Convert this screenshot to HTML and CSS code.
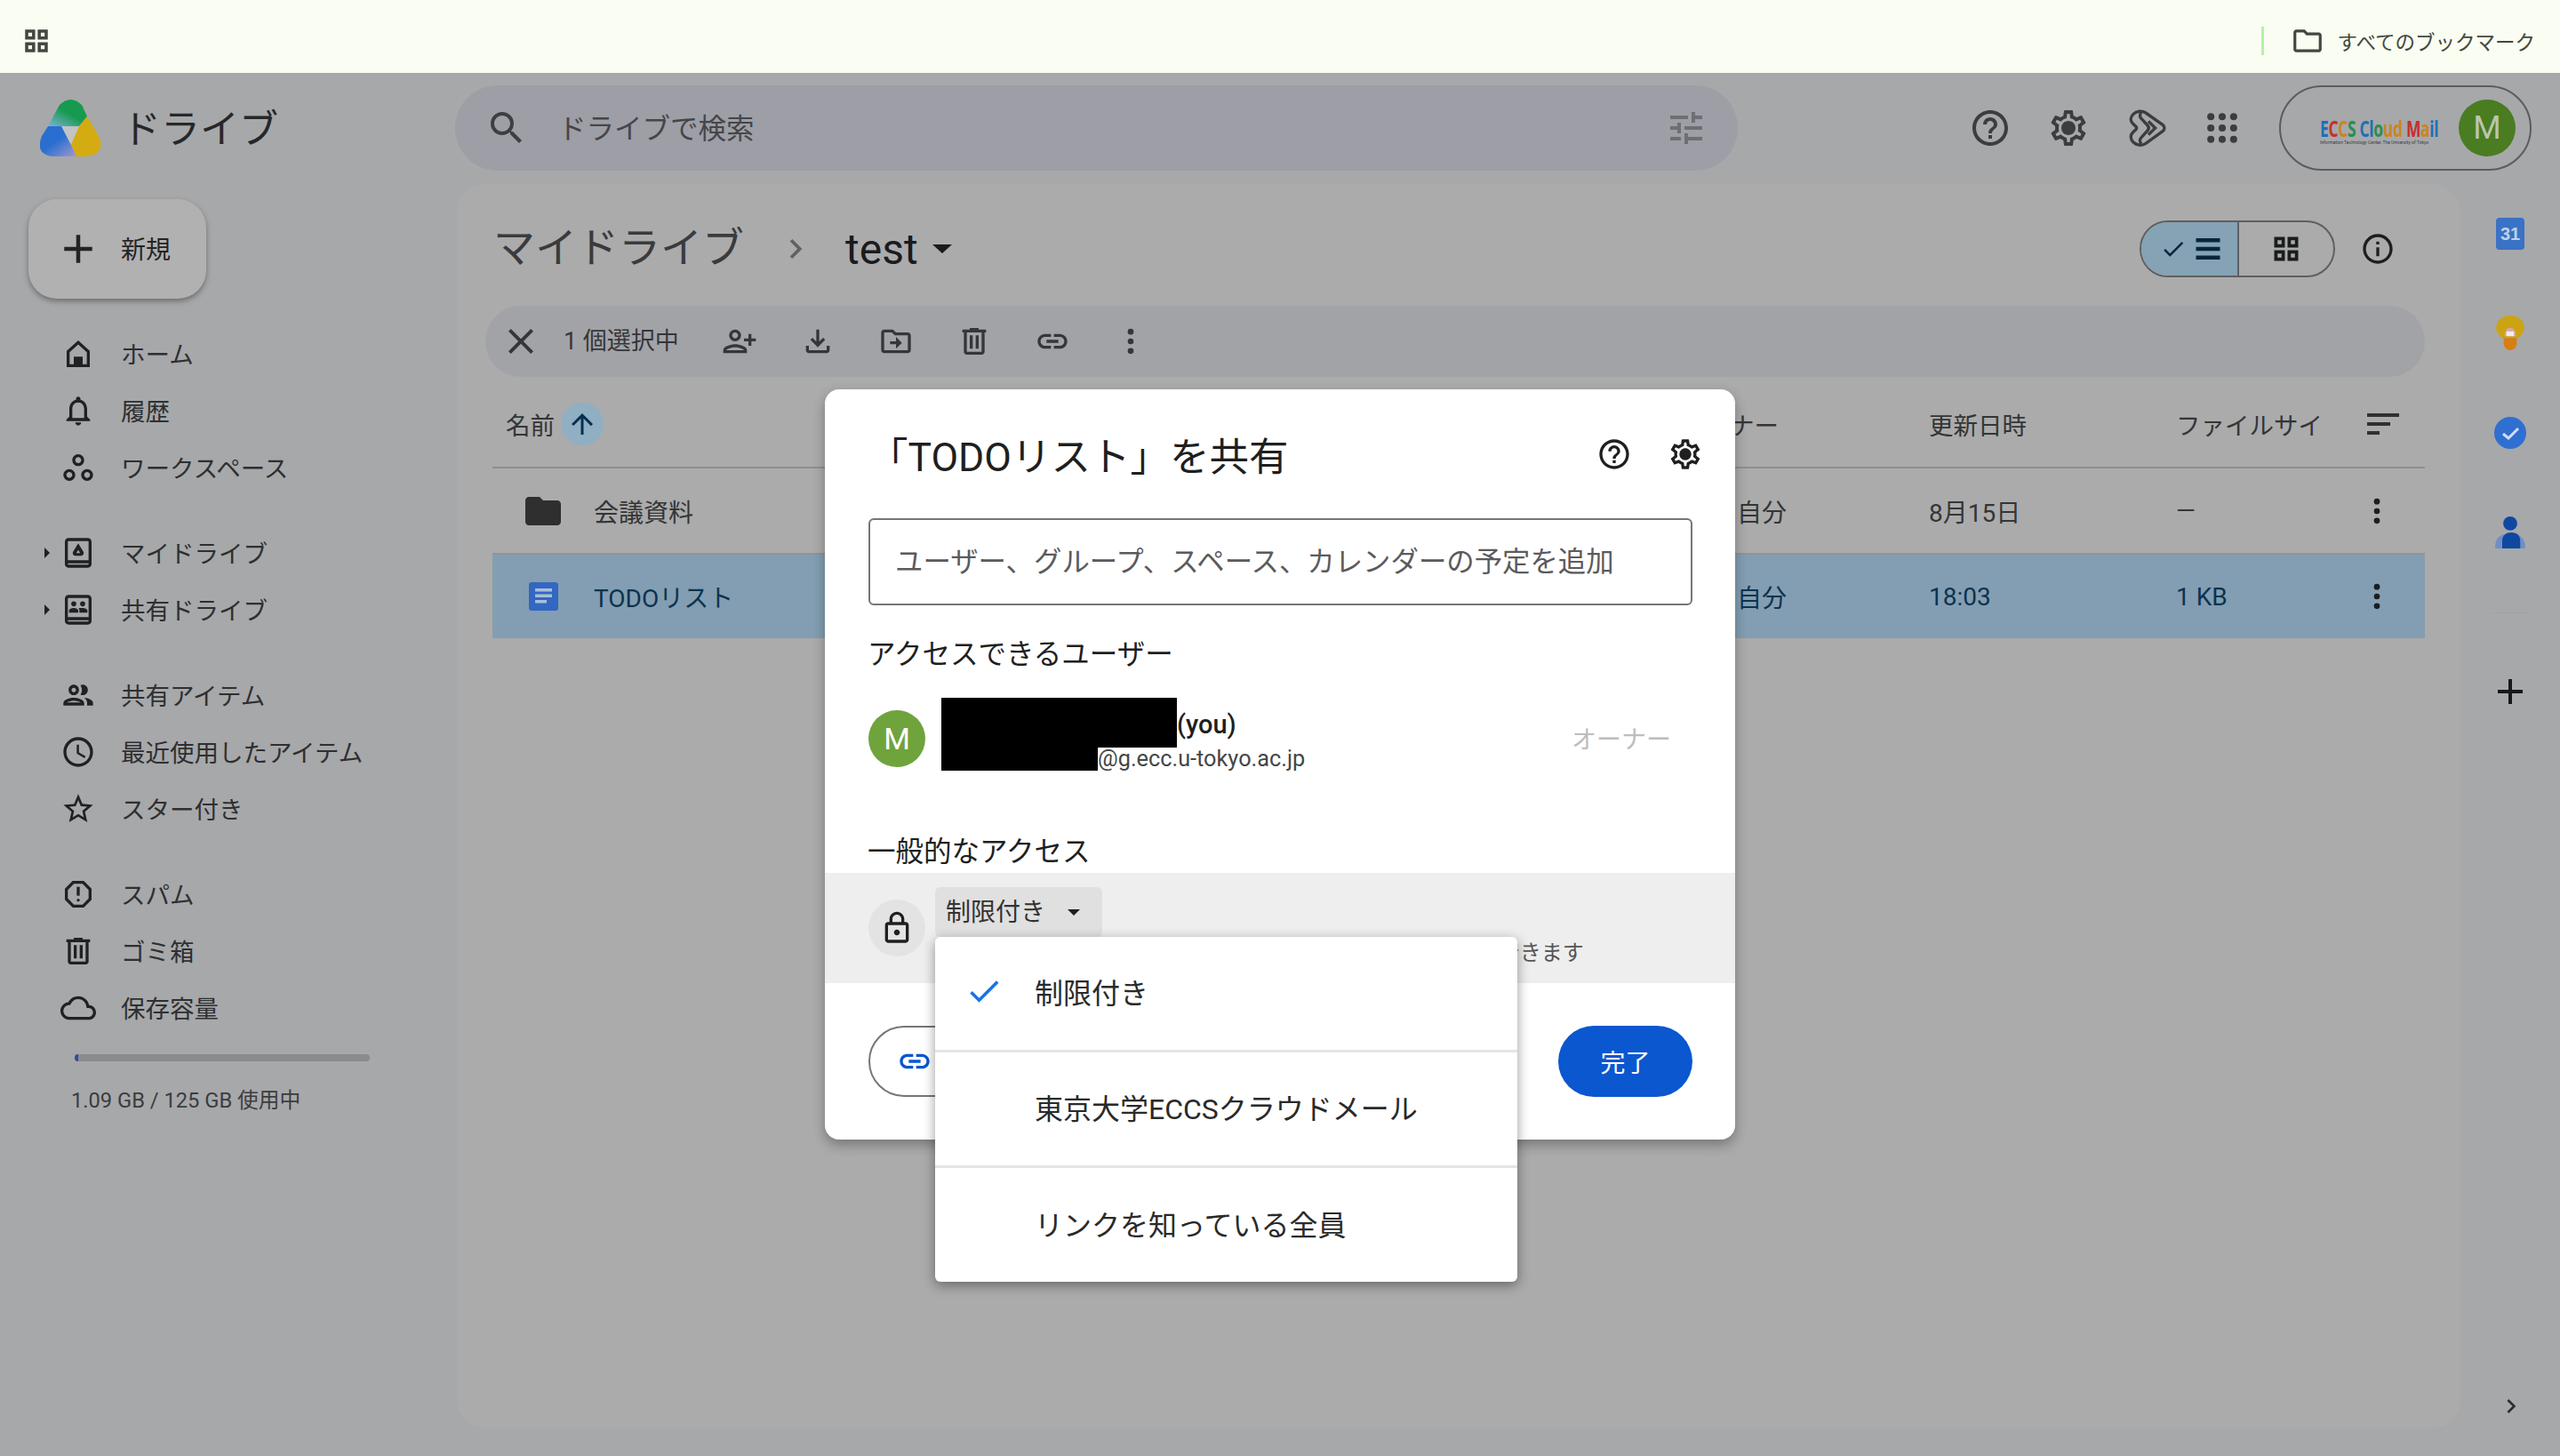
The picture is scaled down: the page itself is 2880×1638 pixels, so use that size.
FILE: index.html
```html
<!DOCTYPE html>
<html lang="ja">
<head>
    <meta charset="UTF-8">
    <title>マイドライブ - Google ドライブ</title>
    <link rel="stylesheet" href="styles.css">
</head>
<body>
    <!-- shared icons -->
    <svg class="sprite" xmlns="http://www.w3.org/2000/svg">
        <symbol id="i-grid" viewBox="0 0 24 24"><path fill-rule="evenodd" d="M3 3h8v8H3zm2.5 2.5v3h3v-3zM13 3h8v8h-8zm2.5 2.5v3h3v-3zM3 13h8v8H3zm2.5 2.5v3h3v-3zM13 13h8v8h-8zm2.5 2.5v3h3v-3z"/></symbol>
        <symbol id="i-help" viewBox="0 0 24 24"><path d="M11 18h2v-2h-2v2zm1-16C6.48 2 2 6.48 2 12s4.48 10 10 10 10-4.48 10-10S17.52 2 12 2zm0 18c-4.41 0-8-3.59-8-8s3.59-8 8-8 8 3.59 8 8-3.59 8-8 8zm0-14c-2.21 0-4 1.79-4 4h2c0-1.1.9-2 2-2s2 .9 2 2c0 2-3 1.75-3 5h2c0-2.25 3-2.5 3-5 0-2.21-1.79-4-4-4z"/></symbol>
        <symbol id="i-gear" viewBox="0 0 24 24"><path d="M19.43 12.98c.04-.32.07-.64.07-.98 0-.34-.03-.66-.07-.98l2.11-1.65c.19-.15.24-.42.12-.64l-2-3.46c-.09-.16-.26-.25-.44-.25-.06 0-.12.01-.17.03l-2.49 1c-.52-.4-1.08-.73-1.69-.98l-.38-2.65C14.46 2.18 14.25 2 14 2h-4c-.25 0-.46.18-.49.42l-.38 2.65c-.61.25-1.17.59-1.69.98l-2.49-1c-.06-.02-.12-.03-.18-.03-.17 0-.34.09-.43.25l-2 3.46c-.13.22-.07.49.12.64l2.11 1.65c-.04.32-.07.65-.07.98 0 .33.03.66.07.98l-2.11 1.65c-.19.15-.24.42-.12.64l2 3.46c.09.16.26.25.44.25.06 0 .12-.01.17-.03l2.49-1c.52.4 1.08.73 1.69.98l.38 2.65c.03.24.24.42.49.42h4c.25 0 .46-.18.49-.42l.38-2.65c.61-.25 1.17-.59 1.69-.98l2.49 1c.06.02.12.03.18.03.17 0 .34-.09.43-.25l2-3.46c.12-.22.07-.49-.12-.64l-2.11-1.65zm-1.98-1.71c.04.31.05.52.05.73 0 .21-.02.43-.05.73l-.14 1.13.89.7 1.08.84-.7 1.21-1.27-.51-1.04-.42-.9.68c-.43.32-.84.56-1.25.73l-1.06.43-.16 1.13-.2 1.35h-1.4l-.19-1.35-.16-1.13-1.06-.43c-.43-.18-.83-.41-1.23-.71l-.91-.7-1.06.43-1.27.51-.7-1.21 1.08-.84.89-.7-.14-1.13c-.03-.31-.05-.54-.05-.74s.02-.43.05-.73l.14-1.13-.89-.7-1.08-.84.7-1.21 1.27.51 1.04.42.9-.68c.43-.32.84-.56 1.25-.73l1.06-.43.16-1.13.2-1.35h1.39l.19 1.35.16 1.13 1.06.43c.43.18.83.41 1.23.71l.91.7 1.06-.43 1.27-.51.7 1.21-1.07.85-.89.7.14 1.13zM12 8c-2.21 0-4 1.79-4 4s1.79 4 4 4 4-1.79 4-4-1.79-4-4-4z"/></symbol>
        <symbol id="i-link" viewBox="0 0 24 24"><path d="M17 7h-4v2h4c1.65 0 3 1.35 3 3s-1.35 3-3 3h-4v2h4c2.76 0 5-2.24 5-5s-2.24-5-5-5zm-6 8H7c-1.65 0-3-1.35-3-3s1.35-3 3-3h4V7H7c-2.76 0-5 2.24-5 5s2.24 5 5 5h4v-2zm-3-4h8v2H8z"/></symbol>
        <symbol id="i-more" viewBox="0 0 24 24"><circle cx="12" cy="5.5" r="2"/><circle cx="12" cy="12" r="2"/><circle cx="12" cy="18.5" r="2"/></symbol>
        <symbol id="i-plus" viewBox="0 0 24 24"><path d="M19 13h-6v6h-2v-6H5v-2h6V5h2v6h6v2z"/></symbol>
        <symbol id="i-trash" viewBox="0 0 24 24"><path d="M15 4V3H9v1H4v2h1v13c0 1.1.9 2 2 2h10c1.1 0 2-.9 2-2V6h1V4h-5zm2 15H7V6h10v13zM9 8h2v9H9zm4 0h2v9h-2z"/></symbol>
        <symbol id="i-book" viewBox="0 0 24 24"><path fill-rule="evenodd" d="M5.5 2h13C19.9 2 21 3.1 21 4.5v15c0 1.4-1.1 2.5-2.5 2.5h-13C4.1 22 3 20.9 3 19.500v-15C3 3.1 4.1 2 5.5 2zm0 2c-.3 0-.5.2-.5.5V17h14V4.500c0-.3-.2-.5-.5-.5zM5 19v.5c0 .3.2.5.5.5h13c.3 0 .5-.2.5-.5V19z"/></symbol>
    </svg>

    <div class="bookmarks">
        <svg class="ic-bar"><use href="#i-grid"/></svg>
        <div class="bookmarks-right">
            <span class="bookmarks-sep"></span>
            <svg class="ic-folder-line" viewBox="0 0 24 24"><path d="M20 6h-8l-2-2H4c-1.1 0-2 .9-2 2v12c0 1.1.9 2 2 2h16c1.1 0 2-.9 2-2V8c0-1.1-.9-2-2-2zm0 12H4V6h5.17l2 2H20v10z"/></svg>
            <span>すべてのブックマーク</span>
        </div>
    </div>

    <div class="app">
        <header class="topbar">
            <div class="brand">
                <svg class="logo" viewBox="0 0 69 64">
                    <defs>
                        <linearGradient id="g-green" x1="0" y1="1" x2="0.45" y2="0.45"><stop offset="0" stop-color="#7fb2d8"/><stop offset="1" stop-color="#169a50"/></linearGradient>
                        <linearGradient id="g-blue" x1="0.45" y1="0.5" x2="0.9" y2="1"><stop offset="0" stop-color="#2a6fd0"/><stop offset="1" stop-color="#9a94cf"/></linearGradient>
                    </defs>
                    <path fill="#c2c3c4" d="M23 30h22L35 51z"/>
                    <path fill="url(#g-green)" d="M22 6Q34.5-6 47 6L53 19 44 30H23L9 30z"/>
                    <path fill="url(#g-blue)" d="M24 30 41 63 40 64H15Q-6 62 2 41L9 30z"/>
                    <path fill="#d5ab12" d="M53 19 67 43Q73 62 52 64H41L35 51 44 30z"/>
                </svg>
                <span class="brand-name">ドライブ</span>
            </div>
            <div class="search">
                <svg class="ic" viewBox="0 0 24 24"><path d="M15.5 14h-.79l-.28-.27A6.471 6.471 0 0 0 16 9.5 6.5 6.5 0 1 0 9.5 16c1.61 0 3.09-.59 4.23-1.57l.27.28v.79l5 4.99L20.49 19l-4.99-5zm-6 0C7.01 14 5 11.99 5 9.5S7.01 5 9.5 5 14 7.01 14 9.5 11.99 14 9.5 14z"/></svg>
                <span class="search-text">ドライブで検索</span>
                <svg class="ic tune" viewBox="0 0 24 24"><path d="M3 17v2h6v-2H3zM3 5v2h10V5H3zm10 16v-2h8v-2h-8v-2h-2v6h2zM7 9v2H3v2h4v2h2V9H7zm14 4v-2H11v2h10zm-6-4h2V7h4V5h-4V3h-2v6z"/></svg>
            </div>
            <div class="top-icons">
                <span class="slot"><svg class="ic"><use href="#i-help"/></svg></span>
                <span class="slot"><svg class="ic"><use href="#i-gear"/></svg></span>
                <span class="slot">
                    <svg class="ic gem" viewBox="0 0 24 24"><path d="M4.5 4.2C6.3 2.4 9.3 2 11.5 3.5L21 10.2c1.3 1 1.3 2.7 0 3.6l-9.500 6.900C9.300 22.200 6.300 21.800 4.500 20 2.700 18.200 2.700 16 4.200 14.500L6 12.800c.4-.5.4-1.100 0-1.600L4.200 9.500C2.700 8 2.700 6 4.500 4.200z"/><path d="M9 3.200c-1 1-1 2.500 0 3.500l3.500 3.800c.8.9.8 2 0 3L9 17.300c-1 1-1 2.500 0 3.500M13 8.200l3.800 3.800-3.800 3.800"/></svg>
                </span>
                <span class="slot">
                    <svg class="ic apps" viewBox="0 0 24 24"><circle cx="5" cy="5" r="2.2"/><circle cx="12" cy="5" r="2.2"/><circle cx="19" cy="5" r="2.2"/><circle cx="5" cy="12" r="2.2"/><circle cx="12" cy="12" r="2.2"/><circle cx="19" cy="12" r="2.2"/><circle cx="5" cy="19" r="2.2"/><circle cx="12" cy="19" r="2.2"/><circle cx="19" cy="19" r="2.2"/></svg>
                </span>
            </div>
            <div class="account">
                <div class="eccs">
                    <div class="eccs-name"><b class="c-b">E</b><b class="c-r">C</b><b class="c-o">C</b><b class="c-g">S</b> <b class="c-b">Cl</b><b class="c-g">o</b><b class="c-o">ud</b> <b class="c-r">M</b><b class="c-o">a</b><b class="c-b">il</b></div>
                    <div class="eccs-sub">Information Technology Center, The University of Tokyo</div>
                </div>
                <span class="avatar-top">M</span>
            </div>
        </header>

        <aside class="sidebar">
            <button class="new-btn"><svg class="ic"><use href="#i-plus"/></svg><span>新規</span></button>
            <nav class="nav-group first">
                <a class="nav-item"><i class="tri-slot"></i><span class="nav-icon"><svg class="ic-s" viewBox="0 0 24 24"><path fill-rule="evenodd" d="M12 3 4.200 10v11h15.600V10zM17.800 19H15v-5H9v5H6.200v-8.100L12 5.700l5.800 5.200z"/></svg></span><span>ホーム</span></a>
                <a class="nav-item"><i class="tri-slot"></i><span class="nav-icon"><svg class="ic-s" viewBox="0 0 24 24"><path d="M12 22c1.100 0 2-.9 2-2h-4c0 1.100.9 2 2 2zm6-6v-5c0-3.070-1.630-5.640-4.500-6.320V4c0-.83-.67-1.500-1.500-1.500s-1.500.67-1.500 1.500v.68C7.640 5.360 6 7.920 6 11v5l-2 2v1h16v-1l-2-2zm-2 1H8v-6c0-2.480 1.510-4.500 4-4.500s4 2.020 4 4.500v6z"/></svg></span><span>履歴</span></a>
                <a class="nav-item"><i class="tri-slot"></i><span class="nav-icon"><svg class="ic-s" viewBox="0 0 24 24"><path d="M6 13c-2.200 0-4 1.800-4 4s1.800 4 4 4 4-1.800 4-4-1.800-4-4-4zm0 6c-1.100 0-2-.9-2-2s.9-2 2-2 2 .9 2 2-.9 2-2 2zm6-16C9.800 3 8 4.800 8 7s1.800 4 4 4 4-1.800 4-4-1.800-4-4-4zm0 6c-1.100 0-2-.9-2-2s.9-2 2-2 2 .9 2 2-.9 2-2 2zm6 4c-2.200 0-4 1.800-4 4s1.800 4 4 4 4-1.800 4-4-1.800-4-4-4zm0 6c-1.100 0-2-.9-2-2s.9-2 2-2 2 .9 2 2-.9 2-2 2z"/></svg></span><span>ワークスペース</span></a>
            </nav>
            <nav class="nav-group">
                <a class="nav-item"><i class="tri-slot tri"></i><span class="nav-icon"><svg class="ic-s" viewBox="0 0 24 24"><use href="#i-book"/><path fill-rule="evenodd" d="M12 5.500l3.500 5.800c.6 1.300-.3 2.700-1.700 2.700h-3.600c-1.400 0-2.300-1.400-1.700-2.700zm0 4.500l-1.300 2.200h2.600z"/></svg></span><span>マイドライブ</span></a>
                <a class="nav-item"><i class="tri-slot tri"></i><span class="nav-icon"><svg class="ic-s" viewBox="0 0 24 24"><use href="#i-book"/><circle cx="9" cy="8" r="1.700"/><circle cx="15" cy="8" r="1.700"/><path d="M5.800 14v-1.500c0-1 1.800-1.700 3.200-1.700s3 .7 3 1.700V14zM12.800 14v-1.500c0-.6-.2-1.100-.6-1.500.9-.2 1.900-.2 2.800-.2 1.400 0 3.200.7 3.200 1.700V14z"/></svg></span><span>共有ドライブ</span></a>
            </nav>
            <nav class="nav-group">
                <a class="nav-item"><i class="tri-slot"></i><span class="nav-icon"><svg class="ic-s" viewBox="0 0 24 24"><path d="M9 13.750c-2.340 0-7 1.170-7 3.500V19h14v-1.750c0-2.330-4.660-3.500-7-3.500zM4.340 17c.84-.58 2.870-1.250 4.660-1.250s3.820.67 4.660 1.250H4.340zM9 12c1.930 0 3.500-1.570 3.500-3.500S10.930 5 9 5 5.500 6.570 5.500 8.500 7.070 12 9 12zm0-5c.83 0 1.500.67 1.500 1.500S9.830 10 9 10s-1.500-.67-1.500-1.500S8.170 7 9 7zm7.040 6.810c1.160.84 1.960 1.960 1.960 3.440V19h4v-1.750c0-2.020-3.500-3.170-5.960-3.440zM15 12c1.930 0 3.500-1.570 3.500-3.500S16.930 5 15 5c-.54 0-1.040.13-1.500.35.63.89 1 1.980 1 3.150s-.37 2.260-1 3.150c.46.22.96.35 1.500.35z"/></svg></span><span>共有アイテム</span></a>
                <a class="nav-item"><i class="tri-slot"></i><span class="nav-icon"><svg class="ic-s" viewBox="0 0 24 24"><path d="M11.990 2C6.470 2 2 6.480 2 12s4.470 10 9.990 10C17.520 22 22 17.520 22 12S17.520 2 11.990 2zM12 20c-4.420 0-8-3.580-8-8s3.580-8 8-8 8 3.580 8 8-3.580 8-8 8zm.5-13H11v6l5.250 3.150.75-1.230-4.500-2.670z"/></svg></span><span>最近使用したアイテム</span></a>
                <a class="nav-item"><i class="tri-slot"></i><span class="nav-icon"><svg class="ic-s" viewBox="0 0 24 24"><path d="M22 9.240l-7.190-.62L12 2 9.190 8.630 2 9.240l5.460 4.730L5.820 21 12 17.270 18.180 21l-1.630-7.030L22 9.240zM12 15.400l-3.760 2.270 1-4.280-3.320-2.880 4.380-.38L12 6.100l1.710 4.040 4.380.38-3.320 2.880 1 4.280L12 15.400z"/></svg></span><span>スター付き</span></a>
            </nav>
            <nav class="nav-group">
                <a class="nav-item"><i class="tri-slot"></i><span class="nav-icon"><svg class="ic-s" viewBox="0 0 24 24"><path d="M15.730 3H8.270L3 8.270v7.460L8.270 21h7.460L21 15.730V8.270L15.730 3zM19 14.900L14.900 19H9.100L5 14.900V9.100L9.100 5h5.800L19 9.100v5.800z"/><circle cx="12" cy="16" r="1"/><path d="M11 7h2v6h-2z"/></svg></span><span>スパム</span></a>
                <a class="nav-item"><i class="tri-slot"></i><span class="nav-icon"><svg class="ic-s"><use href="#i-trash"/></svg></span><span>ゴミ箱</span></a>
                <a class="nav-item"><i class="tri-slot"></i><span class="nav-icon"><svg class="ic-s" viewBox="0 0 24 24"><path d="M19.350 10.040C18.670 6.590 15.640 4 12 4 9.110 4 6.600 5.640 5.350 8.040 2.340 8.360 0 10.910 0 14c0 3.310 2.690 6 6 6h13c2.760 0 5-2.240 5-5 0-2.640-2.050-4.780-4.650-4.960zM19 18H6c-2.210 0-4-1.790-4-4 0-2.050 1.530-3.760 3.560-3.970l1.070-.11.5-.95C8.080 7.140 9.940 6 12 6c2.620 0 4.880 1.860 5.390 4.430l.3 1.500 1.530.11c1.560.1 2.780 1.410 2.780 2.960 0 1.650-1.350 3-3 3z"/></svg></span><span>保存容量</span></a>
            </nav>
            <div class="storage-bar"><span class="storage-fill"></span></div>
            <div class="storage-text">1.09 GB / 125 GB 使用中</div>
        </aside>

        <main class="panel">
            <div class="title-row">
                <span class="crumb">マイドライブ</span>
                <svg class="crumb-chev" viewBox="0 0 24 24"><path d="M8.590 16.590 13.170 12 8.590 7.410 10 6l6 6-6 6z"/></svg>
                <span class="crumb-current">test</span>
                <span class="caret-big"></span>
                <div class="view-toggle">
                    <span class="toggle-on">
                        <svg class="ic-check" viewBox="0 0 24 24"><path d="M9 16.170 4.830 12l-1.420 1.410L9 19 21 7l-1.410-1.410z"/></svg>
                        <svg class="ic-list" viewBox="0 0 24 24"><path d="M3 4h18v3H3zM3 10.500h18v3H3zM3 17h18v3H3z"/></svg>
                    </span>
                    <span class="toggle-off"><svg class="ic-list"><use href="#i-grid"/></svg></span>
                </div>
                <svg class="ic-s info" viewBox="0 0 24 24"><path d="M11 7h2v2h-2zm0 4h2v6h-2zm1-9C6.480 2 2 6.480 2 12s4.480 10 10 10 10-4.480 10-10S17.520 2 12 2zm0 18c-4.410 0-8-3.590-8-8s3.590-8 8-8 8 3.590 8 8-3.590 8-8 8z"/></svg>
            </div>

            <div class="select-bar">
                <svg class="ic" viewBox="0 0 24 24"><path d="M19 6.410 17.590 5 12 10.590 6.410 5 5 6.410 10.590 12 5 17.590 6.410 19 12 13.410 17.590 19 19 17.590 13.410 12z"/></svg>
                <span class="select-count">1 個選択中</span>
                <span class="slot first-action"><svg class="ic-s" viewBox="0 0 24 24"><path d="M13 8c0-2.210-1.790-4-4-4S5 5.790 5 8s1.790 4 4 4 4-1.790 4-4zm-2 0c0 1.100-.9 2-2 2s-2-.9-2-2 .9-2 2-2 2 .9 2 2zM1 18v2h16v-2c0-2.660-5.330-4-8-4s-8 1.340-8 4zm2 0c.2-.71 3.300-2 6-2 2.690 0 5.770 1.280 6 2H3zM20 10V7h-2v3h-3v2h3v3h2v-3h3v-2h-3z"/></svg></span>
                <span class="slot"><svg class="ic-s" viewBox="0 0 24 24"><path d="M18 15v3H6v-3H4v3c0 1.100.9 2 2 2h12c1.100 0 2-.9 2-2v-3h-2zm-1-4-1.410-1.410L13 12.170V4h-2v8.170L8.410 9.590 7 11l5 5 5-5z"/></svg></span>
                <span class="slot"><svg class="ic-s" viewBox="0 0 24 24"><path d="M20 6h-8l-2-2H4c-1.100 0-2 .9-2 2v12c0 1.100.9 2 2 2h16c1.100 0 2-.9 2-2V8c0-1.100-.9-2-2-2zm0 12H4V6h5.170l2 2H20v10zm-8-4H8v-2h4V9l4 4-4 4v-3z"/></svg></span>
                <span class="slot"><svg class="ic-s"><use href="#i-trash"/></svg></span>
                <span class="slot"><svg class="ic-s"><use href="#i-link"/></svg></span>
                <span class="slot"><svg class="ic-s"><use href="#i-more"/></svg></span>
            </div>

            <div class="file-table">
                <div class="file-row file-head">
                    <div class="name-head">名前<span class="sort-up"><svg class="ic-arrow" viewBox="0 0 24 24"><path d="M4 12l1.410 1.410L11 7.830V20h2V7.830l5.580 5.590L20 12l-8-8-8 8z"/></svg></span></div>
                    <div class="owner-head">オーナー</div>
                    <div>更新日時</div>
                    <div>ファイルサイ</div>
                    <svg class="ic-sort" viewBox="0 0 36 24"><path d="M0 0h36v4H0zM0 10h26v4H0zM0 20h14v4H0z"/></svg>
                </div>
                <div class="file-row">
                    <div class="name-cell">
                        <span class="file-icon"><svg class="ic" viewBox="0 0 24 24"><path d="M10 4H4c-1.100 0-1.990.9-1.990 2L2 18c0 1.100.9 2 2 2h16c1.100 0 2-.9 2-2V8c0-1.100-.9-2-2-2h-8l-2-2z"/></svg></span>会議資料
                    </div>
                    <div>自分</div>
                    <div>8月15日</div>
                    <div>—</div>
                    <svg class="ic-s"><use href="#i-more"/></svg>
                </div>
                <div class="file-row selected">
                    <div class="name-cell">
                        <span class="file-icon"><svg class="doc" viewBox="0 0 33 32"><rect width="33" height="32" rx="3" fill="#3267c2"/><path fill="#a9bfd8" d="M7 7h19v3.500H7zM7 13.500h19V17H7zM7 20h13v3.500H7z"/></svg></span>TODOリスト
                    </div>
                    <div>自分</div>
                    <div>18:03</div>
                    <div>1 KB</div>
                    <svg class="ic-s"><use href="#i-more"/></svg>
                </div>
            </div>
        </main>

        <aside class="rail">
            <div class="rail-slot"><span class="cal">31</span></div>
            <div class="rail-slot">
                <svg class="rail-ic rail-keep" viewBox="0 0 32 38"><path fill="#cba414" d="M16 0C7 0 1 6 1 13c0 5 3 8 7 11h16c4-3 7-6 7-11 0-7-6-13-15-13z"/><path fill="#d67f10" d="M9 24h14v6a7 7 0 0 1-14 0z"/><path fill="#dba6a6" d="M10 22c0-5 2-9 6-9s6 4 6 9z"/><rect x="12" y="17" width="8" height="5" fill="#eee"/></svg>
            </div>
            <div class="rail-slot">
                <svg class="rail-ic" viewBox="0 0 36 36"><circle cx="18" cy="18" r="18" fill="#2f6fd1"/><path d="M10 19l6 5 11-11" fill="none" stroke="#d5def0" stroke-width="3"/></svg>
            </div>
            <div class="rail-slot">
                <svg class="rail-ic" viewBox="0 0 30 32"><circle cx="15" cy="7" r="7" fill="#0f48a0"/><path fill="#6f8fc5" d="M0 30c0-9 6-13 15-13 8 0 15 4 15 13v2H0z"/><path fill="#0f48a0" d="M7 32V24c0-5 4-8 9-8 6 0 9 3 9 9v7z"/></svg>
            </div>
            <div class="rail-sep"></div>
            <div class="rail-slot rail-add"><svg class="ic"><use href="#i-plus"/></svg></div>
            <svg class="rail-chev" viewBox="0 0 24 24"><path d="M8.590 16.590 13.170 12 8.590 7.410 10 6l6 6-6 6z"/></svg>
        </aside>
    </div>

    <div class="dialog">
        <div class="dialog-head">
            <h1 class="dialog-title">「TODOリスト」を共有</h1>
            <svg class="ic-s dialog-help"><use href="#i-help"/></svg>
            <svg class="ic-s"><use href="#i-gear"/></svg>
        </div>
        <div class="share-input"><span>ユーザー、グループ、スペース、カレンダーの予定を追加</span></div>
        <h2 class="section-title users-title">アクセスできるユーザー</h2>
        <div class="owner-row">
            <span class="avatar">M</span>
            <div class="owner-info">
                <div class="owner-line"><span class="redact redact-name"></span><span class="owner-you">(you)</span></div>
                <div class="owner-line"><span class="redact redact-mail"></span><span class="owner-mail">@g.ecc.u-tokyo.ac.jp</span></div>
            </div>
            <span class="owner-role">オーナー</span>
        </div>
        <h2 class="section-title access-title">一般的なアクセス</h2>
        <div class="access-band">
            <span class="lock-circle"><svg class="ic-s" viewBox="0 0 24 24"><path d="M18 8h-1V6c0-2.760-2.240-5-5-5S7 3.240 7 6v2H6c-1.100 0-2 .9-2 2v10c0 1.100.9 2 2 2h12c1.100 0 2-.9 2-2V10c0-1.100-.9-2-2-2zM9 6c0-1.660 1.340-3 3-3s3 1.340 3 3v2H9V6zm9 14H6V10h12v10zm-6-3c1.100 0 2-.9 2-2s-.9-2-2-2-2 .9-2 2 .9 2 2 2z"/></svg></span>
            <div class="access-col">
                <div class="access-select"><span>制限付き</span><span class="caret"></span></div>
                <div class="access-note">アクセス権のあるユーザーのみが、リンクから開くことができます</div>
            </div>
        </div>
        <div class="dialog-foot">
            <div class="copy-btn"><svg class="ic-s"><use href="#i-link"/></svg>リンクをコピー</div>
            <div class="done-btn">完了</div>
        </div>

        <ul class="access-menu">
            <li class="menu-item"><svg class="menu-check" viewBox="0 0 24 24"><path d="M9 16.170 4.830 12l-1.420 1.410L9 19 21 7l-1.410-1.410z"/></svg>制限付き</li>
            <li class="menu-item">東京大学ECCSクラウドメール</li>
            <li class="menu-item">リンクを知っている全員</li>
        </ul>
    </div>
</body>
</html>
```

FILE: styles.css
```css
* {
    box-sizing: border-box;
}
body {
    margin: 0;
    position: relative;
    width: 2880px;
    height: 1638px;
    overflow: hidden;
    background-color: #a7a8aa;
    color: #2d2e30;
    font-family: Roboto, "Noto Sans CJK JP", sans-serif;
    font-size: 28px;
}
.sprite {
    display: none;
}
svg {
    fill: currentColor;
    flex-shrink: 0;
}
.ic {
    width: 48px;
    height: 48px;
}
.ic-s {
    width: 40px;
    height: 40px;
}

/* bookmarks bar */
.bookmarks {
    display: flex;
    justify-content: space-between;
    align-items: center;
    height: 82px;
    padding: 10px 28px 0 24px;
    background-color: #f9fdf2;
    color: #43483f;
    font-size: 22.5px;
}
.ic-bar {
    width: 34px;
    height: 34px;
}
.bookmarks-right {
    display: flex;
    align-items: center;
}
.bookmarks-sep {
    width: 3px;
    height: 32px;
    margin-right: 30px;
    background-color: #b6f0a8;
}
.ic-folder-line {
    width: 38px;
    height: 38px;
    margin-right: 14px;
}

/* app grid */
.app {
    display: grid;
    grid-template-columns: 514px 2254px 112px;
    grid-template-rows: 125px 1431px;
}
.topbar {
    grid-column: 1 / -1;
    display: flex;
    align-items: flex-start;
    padding-top: 14px;
}
.brand {
    display: flex;
    align-items: center;
    width: 512px;
    height: 96px;
    padding-left: 45px;
    color: #26272a;
}
.logo {
    width: 69px;
    height: 64px;
}
.brand-name {
    margin: 0 0 5px 23px;
    font-size: 44px;
}
.search {
    display: flex;
    align-items: center;
    width: 1443px;
    height: 96px;
    padding: 0 34px;
    border-radius: 48px;
    background-color: #9d9ea6;
    color: #3d3e42;
}
.search-text {
    margin: 0 0 5px 34px;
    font-size: 31.5px;
    color: #45464a;
}
.tune {
    margin-left: auto;
    color: #6e6f75;
}
.top-icons {
    display: flex;
    margin-left: 240px;
    color: #3c3d3f;
}
.slot {
    display: flex;
    justify-content: center;
    align-items: center;
    width: 88px;
    height: 96px;
}
.gem {
    fill: none;
    stroke: currentColor;
    stroke-width: 1.7;
}
.apps {
    margin-left: -6px;
    width: 44px;
    height: 44px;
}
.account {
    display: flex;
    align-items: center;
    width: 284px;
    height: 96px;
    margin-left: 17px;
    padding-left: 44px;
    border: 2px solid #5b5c5f;
    border-radius: 48px;
}
.eccs {
    width: 136px;
    padding-top: 4px;
    white-space: nowrap;
}
.eccs-name {
    font-family: "Open Sans", sans-serif;
    font-size: 25px;
    line-height: 30px;
    letter-spacing: -.5px;
    transform: scaleX(.7);
    transform-origin: left center;
}
.eccs-name b {
    font-weight: 700;
}
.c-b { color: #1f6fb5; }
.c-r { color: #c4302b; }
.c-o { color: #c9861f; }
.c-g { color: #2b8c4f; }
.eccs-sub {
    margin-top: -3px;
    font-size: 5px;
    line-height: 8px;
    color: #3b3c3e;
}
.avatar-top {
    display: flex;
    justify-content: center;
    align-items: center;
    width: 64px;
    height: 64px;
    margin-left: 20px;
    border-radius: 50%;
    background-color: #4a7c22;
    color: #b9c7ae;
    font-size: 36px;
}

/* sidebar */
.sidebar {
    padding-top: 17px;
}
.new-btn {
    display: flex;
    align-items: center;
    gap: 21px;
    width: 200px;
    height: 112px;
    margin-left: 32px;
    padding: 0 0 0 29px;
    border: none;
    border-radius: 32px;
    background-color: #b1b1b1;
    box-shadow: 0 3px 6px rgba(0, 0, 0, .35);
    color: #232426;
    font: inherit;
}
.new-btn .ic {
    width: 54px;
    height: 54px;
}
.new-btn span {
    margin-bottom: 3px;
}
.nav-group {
    display: flex;
    flex-direction: column;
    margin-top: 32px;
}
.nav-group.first {
    margin-top: 30px;
}
.nav-item {
    display: flex;
    align-items: center;
    height: 64px;
    padding-left: 50px;
    font-size: 27.5px;
    color: #2e2f31;
}
.nav-item span:last-child {
    margin-bottom: 2px;
}
.nav-icon {
    display: flex;
    justify-content: center;
    width: 48px;
    margin-right: 24px;
    color: #202123;
}
.tri-slot {
    width: 14px;
}
.tri {
    height: 0;
    border-left: 6px solid #202123;
    border-top: 6px solid transparent;
    border-bottom: 6px solid transparent;
}
.storage-bar {
    height: 8px;
    width: 332px;
    margin: 20px 0 0 84px;
    border-radius: 4px;
    background-color: #8a8b8d;
    overflow: hidden;
}
.storage-fill {
    display: block;
    width: 4px;
    height: 100%;
    background-color: #2a4f9a;
}
.storage-text {
    margin: 26px 0 0 80px;
    font-size: 23.7px;
    line-height: 36px;
    color: #3b3c3e;
}

/* main panel */
.panel {
    height: 1400px;
    padding: 41px 40px 0 32px;
    border-radius: 32px;
    background-color: #ababab;
}
.title-row {
    display: flex;
    align-items: center;
    height: 64px;
    padding-left: 9px;
}
.crumb {
    margin-bottom: 12px;
    font-size: 47px;
    color: #3a3b3d;
}
.crumb-chev {
    width: 44px;
    height: 44px;
    margin-left: 36px;
    color: #606163;
}
.crumb-current {
    margin-left: 34px;
    font-size: 48px;
    color: #1a1b1d;
}
.caret-big {
    width: 0;
    height: 0;
    margin-left: 16px;
    border-left: 11px solid transparent;
    border-right: 11px solid transparent;
    border-top: 10px solid #1a1b1d;
}
.view-toggle {
    display: flex;
    width: 220px;
    height: 64px;
    margin-left: auto;
    margin-right: 28px;
    border: 2px solid #5e5f61;
    border-radius: 32px;
    overflow: hidden;
}
.toggle-on {
    display: flex;
    align-items: center;
    justify-content: center;
    gap: 6px;
    width: 110px;
    padding-left: 6px;
    border-right: 2px solid #5e5f61;
    background-color: #86a2b5;
    color: #06263c;
}
.toggle-off {
    display: flex;
    flex: 1;
    align-items: center;
    justify-content: center;
    color: #1b1c1e;
}
.ic-check {
    width: 30px;
    height: 30px;
}
.ic-list {
    width: 36px;
    height: 36px;
}
.info {
    margin-right: 33px;
    color: #1d1e20;
}
.select-bar {
    display: flex;
    align-items: center;
    height: 80px;
    margin-top: 32px;
    padding-left: 16px;
    border-radius: 40px;
    background-color: #a2a3a7;
    color: #35363a;
}
.select-count {
    margin: 0 0 5px 24px;
    font-size: 27px;
}
.first-action {
    margin-left: 24px;
}
.file-table {
    margin-left: 8px;
}
.file-row {
    display: grid;
    grid-template-columns: 1400px 216px 278px 202px 48px;
    align-items: center;
    height: 96px;
    border-top: 2px solid #949495;
    font-size: 28px;
    color: #343537;
}
.file-head {
    height: 103px;
    padding-top: 4px;
    border-top: none;
    border-bottom: 2px solid #8e8f90;
    font-size: 27.5px;
}
.file-head + .file-row {
    border-top: none;
    height: 95px;
}
.name-head {
    display: flex;
    align-items: center;
    padding-left: 15px;
}
.owner-head {
    margin-left: -63px;
}
.sort-up {
    display: flex;
    justify-content: center;
    align-items: center;
    width: 48px;
    height: 48px;
    margin-left: 7px;
    border-radius: 50%;
    background-color: #90afc3;
    color: #06304e;
}
.ic-arrow {
    width: 36px;
    height: 36px;
}
.ic-sort {
    width: 36px;
    height: 24px;
    margin-left: 13px;
    color: #2f3032;
}
.name-cell {
    display: flex;
    align-items: center;
}
.file-icon {
    display: flex;
    justify-content: center;
    align-items: center;
    width: 114px;
    color: #2f2f30;
}
.doc {
    width: 33px;
    height: 32px;
}
.file-row.selected {
    background-color: #839eb2;
    color: #0c3350;
}
.file-row .ic-s {
    margin-left: 4px;
    color: #1c1d1f;
}

/* right rail */
.rail {
    display: flex;
    flex-direction: column;
    align-items: center;
    padding-bottom: 40px;
}
.rail-slot {
    display: flex;
    justify-content: center;
    align-items: center;
    height: 112px;
}
.cal {
    display: flex;
    justify-content: center;
    align-items: center;
    width: 32px;
    height: 36px;
    border-radius: 4px;
    background-color: #3a72c5;
    color: #bcd2ea;
    font-family: "Liberation Sans", sans-serif;
    font-size: 20px;
    font-weight: 700;
}
.rail-ic {
    width: 36px;
    height: 36px;
}
.rail-keep {
    height: 40px;
}
.rail-sep {
    width: 40px;
    height: 1px;
    margin-top: 34px;
    background-color: #a0a1a3;
}
.rail-add {
    margin-top: 32px;
    color: #17181a;
}
.rail-chev {
    width: 32px;
    height: 32px;
    margin-top: auto;
    margin-left: 2px;
    color: #2d2e30;
}

/* share dialog */
.dialog {
    position: absolute;
    left: 928px;
    top: 438px;
    width: 1024px;
    height: 844px;
    border-radius: 16px;
    background-color: #fff;
    box-shadow: 0 6px 14px rgba(0, 0, 0, .3);
    color: #1f1f1f;
}
.dialog-head {
    display: flex;
    align-items: center;
    height: 145px;
    padding: 0 36px 0 49px;
}
.dialog-title {
    margin: 0;
    font-size: 44.5px;
    font-weight: 400;
}
.dialog-help {
    margin-left: auto;
    margin-right: 40px;
}
.share-input {
    display: flex;
    align-items: center;
    height: 98px;
    margin: 0 48px 0 49px;
    padding: 0 0 5px 28px;
    border: 2px solid #747775;
    border-radius: 6px;
    font-size: 31.4px;
    color: #5a5b5d;
}
.section-title {
    margin: 0 0 0 48px;
    font-size: 31.5px;
    font-weight: 400;
    line-height: 44px;
}
.users-title {
    margin-top: 34px;
}
.access-title {
    margin-top: 60px;
    margin-bottom: -2px;
}
.owner-row {
    display: flex;
    align-items: center;
    height: 92px;
    margin-top: 26px;
    padding: 0 72px 0 49px;
}
.avatar {
    display: flex;
    justify-content: center;
    align-items: center;
    width: 64px;
    height: 64px;
    border-radius: 50%;
    background-color: #6fa33c;
    color: #fff;
    font-size: 34px;
}
.owner-info {
    align-self: flex-start;
    margin-left: 18px;
}
.owner-line {
    display: flex;
    white-space: nowrap;
}
.redact {
    display: block;
    background-color: #000;
}
.redact-name {
    width: 265px;
    height: 56px;
}
.redact-mail {
    width: 176px;
    height: 26px;
}
.owner-you {
    align-self: flex-end;
    margin-bottom: 9px;
    font-size: 29px;
    font-weight: 500;
    line-height: 34px;
}
.owner-mail {
    font-size: 25.3px;
    line-height: 26px;
    color: #444746;
}
.owner-role {
    margin: 0 0 3px auto;
    color: #bdbdbd;
    font-size: 28px;
}
.access-band {
    display: flex;
    align-items: flex-start;
    height: 124px;
    margin-top: 3px;
    padding: 16px 0 0 49px;
    background-color: #eeeeee;
}
.lock-circle {
    display: flex;
    justify-content: center;
    align-items: center;
    width: 64px;
    height: 64px;
    margin-top: 14px;
    border-radius: 50%;
    background-color: #e3e3e3;
}
.access-col {
    margin-left: 11px;
}
.access-select {
    display: flex;
    align-items: center;
    width: 188px;
    height: 56px;
    padding-left: 12px;
    border-radius: 6px;
    background-color: #e0e0e0;
    color: #333;
}
.access-select span:first-child {
    margin-bottom: 5px;
}
.caret {
    width: 0;
    height: 0;
    margin-left: 25px;
    border-left: 7px solid transparent;
    border-right: 7px solid transparent;
    border-top: 7px solid #1f1f1f;
}
.access-note {
    margin: 4px 0 0 12px;
    font-size: 24px;
    line-height: 28px;
    white-space: nowrap;
    color: #555;
}
.dialog-foot {
    display: flex;
    justify-content: space-between;
    height: 80px;
    margin: 48px 48px 0 49px;
}
.copy-btn {
    display: flex;
    align-items: center;
    gap: 12px;
    width: 320px;
    padding-left: 30px;
    border: 2px solid #747775;
    border-radius: 40px;
    color: #0b57d0;
}
.done-btn {
    display: flex;
    justify-content: center;
    align-items: center;
    width: 151px;
    border-radius: 40px;
    background-color: #0b57d0;
    color: #fff;
}

/* dropdown over the dialog */
.access-menu {
    position: absolute;
    left: 124px;
    top: 616px;
    width: 655px;
    margin: 0;
    padding: 0;
    list-style: none;
    border-radius: 6px;
    background-color: #fff;
    box-shadow: 0 4px 14px rgba(0, 0, 0, .4);
    font-size: 32px;
    color: #2a2a2a;
}
.menu-item {
    position: relative;
    display: flex;
    align-items: center;
    height: 130px;
    padding: 0 0 5px 112px;
    border-bottom: 3px solid #e4e4e4;
}
.menu-item:last-child {
    height: 128px;
    border-bottom: none;
}
.menu-check {
    position: absolute;
    left: 33px;
    width: 44px;
    height: 44px;
    color: #1a73e8;
}
```
